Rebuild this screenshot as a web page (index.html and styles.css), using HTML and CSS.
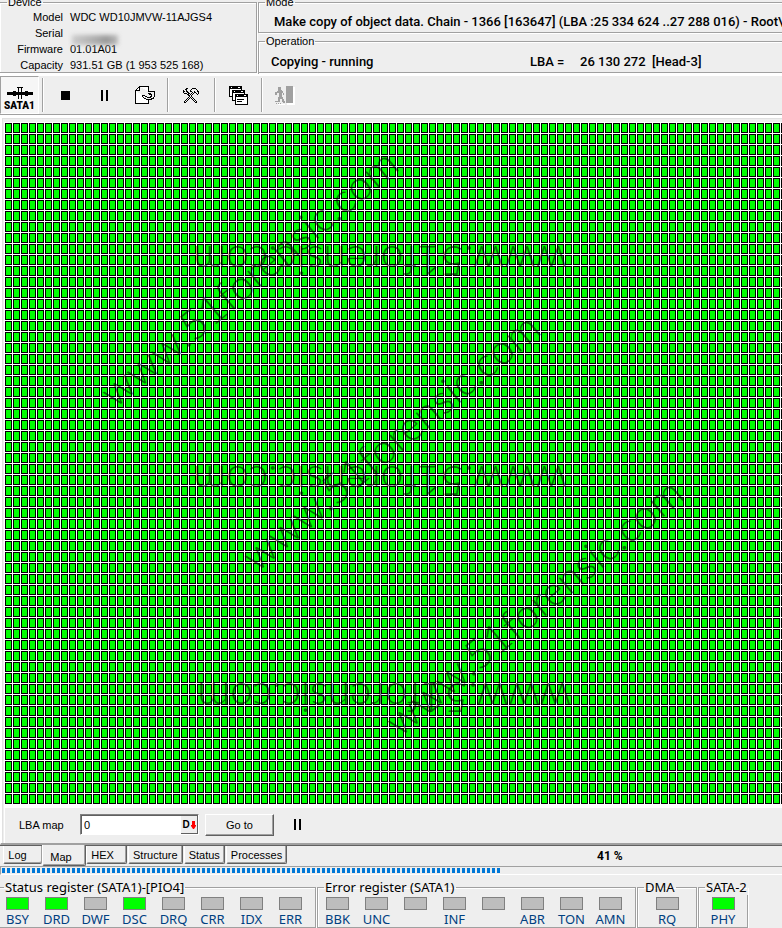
FILE: index.html
```html
<!DOCTYPE html>
<html lang="en">
<head>
<meta charset="utf-8">
<title>Disk copy</title>
<link rel="stylesheet" href="styles.css">
</head>
<body>
<header class="info">
  <fieldset class="group device">
    <legend>Device</legend>
    <dl class="props">
      <dt>Model</dt><dd>WDC WD10JMVW-11AJGS4</dd>
      <dt>Serial</dt><dd><span class="redacted"></span></dd>
      <dt>Firmware</dt><dd>01.01A01</dd>
      <dt>Capacity</dt><dd>931.51 GB (1 953 525 168)</dd>
    </dl>
  </fieldset>
  <div class="task">
    <fieldset class="group mode">
      <legend>Mode</legend>
      <p>Make copy of object data. Chain - 1366 [163647] (LBA :25 334 624 ..27 288 016) - Root\</p>
    </fieldset>
    <fieldset class="group operation">
      <legend>Operation</legend>
      <div class="op-row"><span>Copying - running</span><span class="op-lba">LBA =</span><span class="op-value">26 130 272&nbsp; [Head-3]</span></div>
    </fieldset>
  </div>
</header>

<nav class="toolbar" aria-label="Tools">
  <button class="port" type="button">
    <svg width="26" height="12" viewBox="0 0 26 12" shape-rendering="crispEdges"><path d="M0 5h26v3H0zM6 4h3v5H6zM18 4h3v5h-3zM11 0h1v12h-1zM14 0h1v12h-1zM10 0h6v1h-6z"/></svg>
    <span>SATA1</span>
  </button>
  <div class="tools">
    <button type="button" aria-label="Stop"><svg width="9" height="9"><path d="M0 0h9v9H0z"/></svg></button>
    <button type="button" aria-label="Pause"><svg width="8" height="11"><path d="M0 0h2v11H0zM5 0h2v11H5z"/></svg></button>
    <button type="button" aria-label="Export"><svg width="20" height="18" viewBox="0 0 20 18" shape-rendering="crispEdges"><path d="M4.500.5h9v5M13.500 13.500v4H.5v-13l4-4v4h-4" fill="#fff" stroke="#000"/><path d="M7 9h3v1h2v1h3v-1h1V9h-2V8h-1V7h2V6h-1V5h6v6h-1v2h-2v1h-6v-1h-2v-1h-1v-1H7z"/><path d="M8 10h2v1h2v1h4v-1h1V8h-1V7h-1V6h4v5h-1v1h-2v1h-5v-1h-2v-1H8z" fill="#eee"/></svg></button>
  </div>
  <div class="tools">
    <button type="button" aria-label="Settings"><svg width="16" height="15" viewBox="0 0 16 15" shape-rendering="crispEdges"><path stroke="#000" d="M3 .5h2m4 0h4M2 1.500h2m4 0h1m4 0h1M0 2.500h1m2 0h1m3 0h1m6 0h1M0 3.500h2m1 0h2m2 0h2m2 0h1m2 0h2M0 4.500h1m3 0h2m3 0h1m1 0h2m2 0h1M1 5.500h3m1 0h2m1 0h1m1 0h1m2 0h1m1 0h1M4 6.500h2m1 0h1m1 0h1m4 0h1M5 7.500h2m1 0h1M6 8.500h1m1 0h1M5 9.500h1m1 0h1m1 0h1M4 10.500h1m1 0h1m1 0h1m1 0h1M3 11.500h1m1 0h1m3 0h1m1 0h1M2 12.500h1m1 0h1m5 0h1m1 0h1M1 13.500h1m1 0h1m7 0h1m1 0h1M1 14.500h2m9 0h2"/></svg></button>
  </div>
  <div class="tools">
    <button type="button" aria-label="Windows"><svg width="19" height="19" viewBox="0 0 19 19" shape-rendering="crispEdges"><g fill="#fff" stroke="#000"><path d="M.5.5h12v10H.5z"/><path d="M3.500 4.500h12v10h-12z"/><path d="M6.500 8.500h12v10h-12z"/></g><path d="M0 0h13v3H0zM3 4h13v3H3zM6 8h13v3H6zM8 13h7v1H8zM8 15h5v1H8z"/><path d="M2 1h1v1H2zM9 1h2v1H9zM5 5h1v1H5zM12 5h2v1h-2zM8 9h1v1H8zM15 9h2v1h-2z" fill="#fff"/></svg></button>
  </div>
  <div class="tools last">
    <button type="button" aria-label="Exit" disabled><svg width="20" height="19" viewBox="0 0 20 19" shape-rendering="crispEdges"><path d="M12 1h8v18h-8zM3 18h7v1H3z" fill="#fff"/><path d="M11 0h7v17h-7zM3 1h3v3h1v1h1v2h1v2H8V7H7v4h1v2h1v3h-2v-3H5v3H1v-1h2v-4h1V7H2v2H0V6h2V5h1zM0 15h2v1H0zM8 15h2v2H8z" fill="#a0a0a0"/><path d="M1 17h1v1H1zM3 17h1v1H3zM5 17h1v1H5z" fill="#a0a0a0"/></svg></button>
  </div>
</nav>

<main class="pane">
  <svg class="map" role="img" aria-label="LBA map">
    <defs>
      <pattern id="cell" x="1" y="1" width="8" height="11" patternUnits="userSpaceOnUse">
        <rect width="7" height="10"/><rect x="1" y="1" width="5" height="8" fill="#0f0"/>
      </pattern>
    </defs>
    <rect x="1" y="1" width="100%" height="682" fill="url(#cell)" shape-rendering="crispEdges"/>
    <g class="watermark">
      <text transform="translate(111 287) rotate(-40)">www.51forensic.com</text>
      <text transform="translate(253 451) rotate(-40)">www.51forensic.com</text>
      <text transform="translate(396 616) rotate(-40)">www.51forensic.com</text>
      <text transform="translate(563 124) rotate(180)">www.51forensic.com</text>
      <text transform="translate(563 344) rotate(180)">www.51forensic.com</text>
      <text transform="translate(567 561) rotate(180)">www.51forensic.com</text>
    </g>
  </svg>
  <form class="goto">
    <label for="lba">LBA map</label>
    <div class="field">
      <input id="lba" type="text" value="0">
      <button type="button" aria-label="Decimal"><b>D</b><svg width="5" height="8"><path d="M1 0h3v4h1v1L3 8H2L0 5V4h1z" fill="#f00"/></svg></button>
    </div>
    <button class="go" type="button">Go to</button>
    <button class="hold" type="button" aria-label="Pause map"><svg width="8" height="11"><path d="M0 0h2v11H0zM5 0h2v11H5z"/></svg></button>
  </form>
</main>

<div class="tabbar">
  <div class="tabs" role="tablist">
    <button class="tab log" role="tab">Log</button>
    <button class="tab active" role="tab" aria-selected="true">Map</button>
    <button class="tab hex" role="tab">HEX</button>
    <button class="tab" role="tab">Structure</button>
    <button class="tab" role="tab">Status</button>
    <button class="tab" role="tab">Processes</button>
  </div>
  <span class="percent">41 %</span>
</div>
<div class="progress" role="progressbar" aria-label="Copy progress" aria-valuenow="41"><div class="bar"></div></div>

<footer class="registers">
  <fieldset class="group reg status">
    <legend>Status register (SATA1)-[PIO4]</legend>
    <ul>
      <li class="on">BSY</li><li class="on">DRD</li><li>DWF</li><li class="on">DSC</li><li>DRQ</li><li>CRR</li><li>IDX</li><li>ERR</li>
    </ul>
  </fieldset>
  <fieldset class="group reg">
    <legend>Error register (SATA1)</legend>
    <ul>
      <li>BBK</li><li>UNC</li><li></li><li>INF</li><li></li><li>ABR</li><li>TON</li><li>AMN</li>
    </ul>
  </fieldset>
  <fieldset class="group reg dma">
    <legend>DMA</legend>
    <ul><li>RQ</li></ul>
  </fieldset>
  <fieldset class="group reg phy">
    <legend>SATA-2</legend>
    <ul><li class="on">PHY</li></ul>
  </fieldset>
</footer>
</body>
</html>
```
FILE: styles.css
```css
* { box-sizing: border-box; }

body {
  margin: 0;
  overflow: hidden;
  background: #eee;
  color: #000;
  font: 11px/16px "Liberation Sans", Arial, sans-serif;
}

button, input { font: inherit; color: inherit; }
button { padding: 0; border: 0; background: none; }
svg { display: block; }
p, dl, dd, ul { margin: 0; padding: 0; }

.group {
  min-width: 0;
  margin: 0;
  padding: 0;
  border: 1px solid #a0a0a0;
  box-shadow: 1px 1px #fff, inset 1px 1px #fff;
}
.group legend { padding: 0 1px; }

/* Drive and task summary */
.info {
  display: grid;
  grid-template-columns: 257px 1fr;
  gap: 1px;
  height: 76px;
  overflow: hidden;
  border-bottom: 2px solid #fff;
  box-shadow: inset 0 -1px #a0a0a0;
  white-space: nowrap;
}
.info legend { height: 14px; line-height: 14px; }
.device { height: 78px; margin: -5px 0 0 -1px; }
.device legend { margin-left: 7px; }
.props { display: grid; grid-template-columns: 63px 1fr; column-gap: 7px; }
.props dt { text-align: right; }
.props dd { height: 16px; }
.redacted {
  display: block;
  width: 46px;
  height: 10px;
  margin: 10px 0 0 2px;
  background: linear-gradient(90deg, #ccc, #aaa 55%, #999 75%, #bbb);
  filter: blur(2px);
}
.mode { height: 38px; margin-top: -5px; border-right: 0; }
.mode legend, .operation legend { margin-left: 6px; }
.mode p { padding: 5px 0 0 15px; font: 500 13px/16px Roboto, sans-serif; }
.operation { height: 39px; margin-top: 1px; border-right: 0; }
.op-row { display: grid; grid-template-columns: 259px 50px 1fr; padding: 6px 0 0 12px; font: 500 13px/16px Roboto, sans-serif; }

/* Toolbar */
.toolbar { display: flex; height: 39px; border-bottom: 1px solid #a0a0a0; }
.port {
  width: 39px;
  padding-top: 6px;
  border: 1px solid #a0a0a0;
  border-right-color: #fff;
  border-bottom-color: #fff;
  background: #f6f6f6;
}
.port svg { margin: 1px auto; }
.port span { display: block; font: 900 10px/11px Roboto, sans-serif; }
.tools {
  display: flex;
  justify-content: center;
  min-width: 47px;
  margin: 2px 0;
  padding: 0 2px;
  border-left: 1px solid #a0a0a0;
  box-shadow: inset 1px 0 #fff;
}
.port + .tools { margin-left: 3px; }
.tools button { display: grid; place-items: center; width: 40px; }

/* Map pane */
.pane {
  padding: 6px 0 0 3px;
  border-top: 1px solid #fff;
  border-left: 1px solid #fff;
  border-bottom: 2px solid #a0a0a0;
  box-shadow: inset 1px 2px #fff, inset 2px 3px #e0e0e0;
}
.map { width: 100%; height: 686px; background: #fff; }
.watermark { fill: #000; fill-opacity: 0.55; font: 300 41px Lato, sans-serif; }
.goto { display: flex; align-items: center; height: 35px; padding: 0 0 2px 14px; border-left: 1px solid #fff; }
.goto label { width: 61px; }
.field {
  display: flex;
  width: 119px;
  height: 21px;
  border: 1px solid #808080;
  border-right-color: #fff;
  border-bottom-color: #fff;
  background: #fff;
  box-shadow: inset 1px 1px #606060;
}
.field input { flex: 1; min-width: 0; padding: 0 3px; border: 0; outline: 0; background: none; }
.field button {
  display: flex;
  align-items: center;
  justify-content: center;
  gap: 1px;
  width: 17px;
  margin: 1px 0 0;
  background: #eee;
  border-right: 1px solid #606060;
  border-bottom: 1px solid #606060;
  font-size: 10px;
}
.go {
  width: 69px;
  height: 22px;
  margin: 0 20px 0 6px;
  border: 1px solid #fff;
  border-right-color: #606060;
  border-bottom-color: #606060;
  box-shadow: inset -1px -1px #a0a0a0;
}

/* Tabs */
.tabbar { display: flex; height: 21px; border-top: 1px solid #606060; }
.tabs { display: flex; align-items: flex-start; width: 597px; padding-left: 3px; }
.tab {
  height: 18px;
  margin-right: 1px;
  padding: 0 4px;
  border-left: 1px solid #fff;
  border-right: 1px solid #606060;
  border-bottom: 1px solid #606060;
  border-radius: 0 0 2px 2px;
  box-shadow: inset -1px -1px #a0a0a0;
}
.log { width: 39px; margin: 0; padding-right: 15px; border-right: 0; }
.active { width: 44px; height: 21px; margin: -1px 0 0; padding: 3px 6px 0 0; background: #eee; }
.hex { width: 41px; padding-right: 12px; }
.percent { font: bold 12px/21px Roboto, sans-serif; }

.progress { height: 9px; padding-top: 1px; border: 1px solid #a0a0a0; border-width: 1px 0 0 1px; border-bottom: 1px solid #fff; }
.bar { width: 64%; height: 5px; margin-left: 1px; background: repeating-linear-gradient(90deg, #0078d7 0 3px, transparent 3px 5px); }

/* Register indicators */
.registers { display: flex; gap: 1px; padding-top: 4px; font: 13px/16px "Noto Sans", "Open Sans", sans-serif; }
.reg { height: 49px; padding-right: 5px; }
.reg legend { margin-left: 6px; white-space: nowrap; }
.reg ul { display: flex; list-style: none; padding: 2px 0 0; }
.reg li { width: 39px; color: #004080; text-align: center; }
.reg li::before {
  content: "";
  display: block;
  width: 21px;
  height: 11px;
  margin: 0 auto 1px;
  border: 1px solid #808080;
  background: #bdbdbd;
}
.reg li.on::before { background: #0f0; }
.status { margin-left: -3px; }
.dma, .phy { padding: 0; }
.dma { width: 60px; }
.dma ul, .phy ul { justify-content: center; }
.phy { width: 50px; }
.phy legend { margin-right: -8px; }
```
